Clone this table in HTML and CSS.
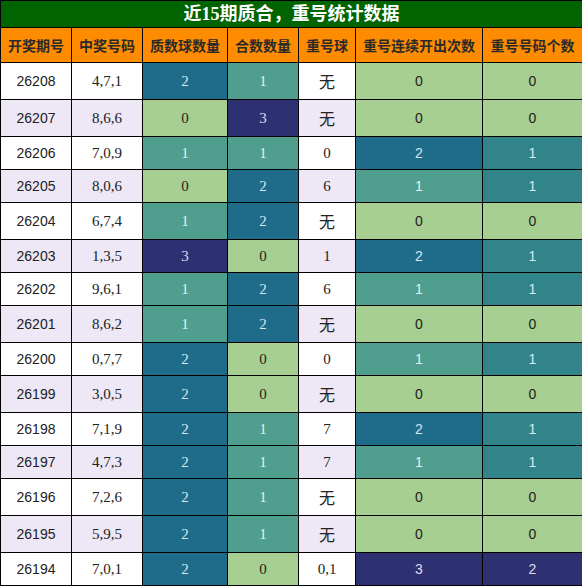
FILE: index.html
```html
<!DOCTYPE html>
<html>
<head>
<meta charset="utf-8">
<link rel="stylesheet" href="styles.css">
</head>
<body>
<table class="stats">
  <colgroup>
    <col class="c1"><col class="c2"><col class="c3"><col class="c4"><col class="c5"><col class="c6"><col class="c7">
  </colgroup>
  <tr class="title-row"><th colspan="7" class="title">近15期质合，重号统计数据</th></tr>
  <tr class="head-row">
    <th>开奖期号</th><th>中奖号码</th><th>质数球数量</th><th>合数数量</th><th>重号球</th><th>重号连续开出次数</th><th>重号号码个数</th>
  </tr>
  <tr class="tall"><td class="sans">26208</td><td class="serif">4,7,1</td><td class="v blue">2</td><td class="v teal">1</td><td class="cjk">无</td><td class="s lg">0</td><td class="s lg">0</td></tr>
  <tr class="tall alt"><td class="sans">26207</td><td class="serif">8,6,6</td><td class="v lg">0</td><td class="v navy">3</td><td class="cjk">无</td><td class="s lg">0</td><td class="s lg">0</td></tr>
  <tr class="short"><td class="sans">26206</td><td class="serif">7,0,9</td><td class="v teal">1</td><td class="v teal">1</td><td class="serif">0</td><td class="s blue">2</td><td class="s teal2">1</td></tr>
  <tr class="short alt"><td class="sans">26205</td><td class="serif">8,0,6</td><td class="v lg">0</td><td class="v blue">2</td><td class="serif">6</td><td class="s teal">1</td><td class="s teal2">1</td></tr>
  <tr class="tall"><td class="sans">26204</td><td class="serif">6,7,4</td><td class="v teal">1</td><td class="v blue">2</td><td class="cjk">无</td><td class="s lg">0</td><td class="s lg">0</td></tr>
  <tr class="short alt"><td class="sans">26203</td><td class="serif">1,3,5</td><td class="v navy">3</td><td class="v lg">0</td><td class="serif">1</td><td class="s blue">2</td><td class="s teal2">1</td></tr>
  <tr class="short"><td class="sans">26202</td><td class="serif">9,6,1</td><td class="v teal">1</td><td class="v blue">2</td><td class="serif">6</td><td class="s teal">1</td><td class="s teal2">1</td></tr>
  <tr class="tall alt"><td class="sans">26201</td><td class="serif">8,6,2</td><td class="v teal">1</td><td class="v blue">2</td><td class="cjk">无</td><td class="s lg">0</td><td class="s lg">0</td></tr>
  <tr class="short"><td class="sans">26200</td><td class="serif">0,7,7</td><td class="v blue">2</td><td class="v lg">0</td><td class="serif">0</td><td class="s teal">1</td><td class="s teal2">1</td></tr>
  <tr class="tall alt"><td class="sans">26199</td><td class="serif">3,0,5</td><td class="v blue">2</td><td class="v lg">0</td><td class="cjk">无</td><td class="s lg">0</td><td class="s lg">0</td></tr>
  <tr class="short"><td class="sans">26198</td><td class="serif">7,1,9</td><td class="v blue">2</td><td class="v teal">1</td><td class="serif">7</td><td class="s blue">2</td><td class="s teal2">1</td></tr>
  <tr class="short alt"><td class="sans">26197</td><td class="serif">4,7,3</td><td class="v blue">2</td><td class="v teal">1</td><td class="serif">7</td><td class="s teal">1</td><td class="s teal2">1</td></tr>
  <tr class="tall"><td class="sans">26196</td><td class="serif">7,2,6</td><td class="v blue">2</td><td class="v teal">1</td><td class="cjk">无</td><td class="s lg">0</td><td class="s lg">0</td></tr>
  <tr class="tall alt"><td class="sans">26195</td><td class="serif">5,9,5</td><td class="v blue">2</td><td class="v teal">1</td><td class="cjk">无</td><td class="s lg">0</td><td class="s lg">0</td></tr>
  <tr class="short"><td class="sans">26194</td><td class="serif">7,0,1</td><td class="v blue">2</td><td class="v lg">0</td><td class="serif">0,1</td><td class="s navy">3</td><td class="s navy">2</td></tr>
</table>
</body>
</html>
```

FILE: styles.css
```css
html, body {
  margin: 0;
  padding: 0;
  background: #ffffff;
}

.stats {
  border-collapse: collapse;
  table-layout: fixed;
  width: 582px;
  color: #222222;
}

.c1 { width: 71px; }
.c2 { width: 71px; }
.c3 { width: 85px; }
.c4 { width: 71px; }
.c5 { width: 57px; }
.c6 { width: 127px; }
.c7 { width: 100px; }

.stats th,
.stats td {
  border: 1px solid #000000;
  padding: 0;
  text-align: center;
  vertical-align: middle;
  background: #ffffff;
}

.stats tr.alt td {
  background: #ede7f6;
}

.title-row { height: 27px; }
.head-row { height: 35px; }
.tall { height: 37px; }
.short { height: 33px; }

.stats th.title {
  background: #006400;
  color: #ffffff;
  font-family: "Liberation Serif", "Noto Sans CJK SC", serif;
  font-size: 18px;
  font-weight: bold;
  line-height: 24px;
}

.head-row th {
  background: #ff8c00;
  color: #2a2a2a;
  font-family: "Noto Sans CJK SC", sans-serif;
  font-size: 14px;
  font-weight: bold;
  line-height: 20px;
  white-space: nowrap;
}

.sans {
  font-family: "Liberation Sans", "Noto Sans CJK SC", sans-serif;
  font-size: 14px;
}

.serif {
  font-family: "Liberation Serif", "Noto Sans CJK SC", serif;
  font-size: 15px;
}

.cjk {
  font-family: "Noto Sans CJK SC", sans-serif;
  font-size: 16px;
}

.v {
  font-family: "Liberation Serif", serif;
  font-size: 15px;
}

.s {
  font-family: "Liberation Sans", sans-serif;
  font-size: 14px;
}

.stats tr td.navy { background: #2d3172; color: #dcdcec; }
.stats tr td.blue { background: #1f6b8a; color: #d9e6ec; }
.stats tr td.teal { background: #4f9e8e; color: #e4f0ec; }
.stats tr td.teal2 { background: #31858a; color: #d8eaea; }
.stats tr td.lg { background: #a6cf91; color: #222222; }
```
